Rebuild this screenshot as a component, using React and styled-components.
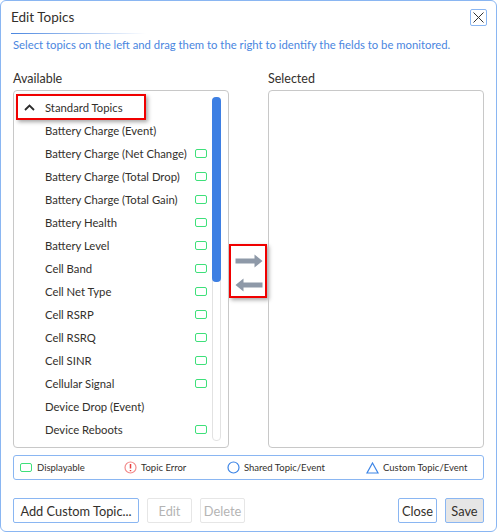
import React from "react";
import styled, { createGlobalStyle } from "styled-components";

const Global = createGlobalStyle`
  html, body { margin: 0; padding: 0; background: #fff; }
  body { font-family: Lato, "Open Sans", sans-serif; color: #2b2b2b; }
`;

const Dialog = styled.div`
  box-sizing: border-box;
  width: 497px;
  height: 532px;
  border: 1px solid #8ab6f2;
  border-radius: 6px;
  padding: 0 12px;
  display: flex;
  flex-direction: column;
  background: #fff;
`;

const Header = styled.div`
  height: 32px;
  display: flex;
  align-items: center;
  justify-content: space-between;
  margin: 0 -3px 0 -2px;
  box-sizing: border-box;
`;

const Title = styled.div`
  font-size: 13.5px;
  color: #33302c;
`;

const CloseX = styled.button`
  width: 17px;
  height: 17px;
  padding: 0;
  border: 1px solid #8ab6f2;
  border-radius: 2px;
  background: #fff;
  display: flex;
  align-items: center;
  justify-content: center;
`;

const Rule = styled.div`
  height: 1px;
  width: 135px;
  margin-left: -2px;
  background: linear-gradient(to right, #4a86e0, #ffffff);
`;

const Hint = styled.div`
  font-size: 11.3px;
  color: #4a86e0;
  height: 22px;
  line-height: 22px;
  white-space: nowrap;
`;

const Columns = styled.div`
  display: grid;
  grid-template-columns: 216px 39px 216px;
  margin-top: 14px;
`;

const Column = styled.div`
  display: flex;
  flex-direction: column;
`;

const Label = styled.div`
  font-size: 12.5px;
  height: 20px;
  line-height: 17px;
  color: #33302c;
`;

const ListBox = styled.div`
  position: relative;
  box-sizing: border-box;
  height: 358px;
  border: 1px solid #c8c8c8;
  border-radius: 4px;
  padding: 5px 0 0 0;
  overflow: hidden;
`;

const Row = styled.div`
  display: flex;
  align-items: center;
  height: 23px;
  padding-left: 31px;
  font-size: 11.3px;
  color: #33302c;
  white-space: nowrap;
`;

const GroupRow = styled(Row)`
  padding-left: 10px;
  gap: 10px;
`;

const RowName = styled.span`
  width: 150px;
`;

const GreenMark = styled.span`
  box-sizing: border-box;
  width: 12px;
  height: 9px;
  border: 1.5px solid #3ee07a;
  border-radius: 2px;
  display: inline-block;
`;

const Track = styled.div`
  position: absolute;
  top: 6px;
  right: 7px;
  width: 9px;
  height: 344px;
  box-sizing: border-box;
  border: 1px solid #e2e2e2;
  border-radius: 4px;
`;

const Thumb = styled.div`
  position: absolute;
  top: -1px;
  left: -1px;
  width: 9px;
  height: 185px;
  border-radius: 4px;
  background: #3d7fe3;
`;

const Callout = styled.div`
  position: absolute;
  box-sizing: border-box;
  border: 2px solid #f00000;
  box-shadow: 2px 2px 4px rgba(0, 0, 0, 0.35);
  top: 3px;
  left: 2px;
  width: 130px;
  height: 26px;
`;

const Middle = styled.div`
  display: flex;
  align-items: center;
  justify-content: flex-start;
  padding-top: 24px;
`;

const ArrowBox = styled.div`
  box-sizing: border-box;
  width: 38px;
  height: 54px;
  padding: 3px 0 0 2px;
  border: 2px solid #f00000;
  box-shadow: 2px 2px 4px rgba(0, 0, 0, 0.35);
  display: flex;
  flex-direction: column;
  align-items: center;
  justify-content: center;
  gap: 10px;
`;

const Legend = styled.div`
  box-sizing: border-box;
  display: grid;
  grid-template-columns: 104px 103px 139px 1fr;
  align-items: center;
  height: 25px;
  margin-top: 7px;
  padding-left: 6px;
  border: 1px solid #8ab6f2;
  border-radius: 3px;
  font-size: 9.5px;
  color: #33302c;
`;

const LegendItem = styled.div`
  display: flex;
  align-items: center;
  gap: 4px;
  white-space: nowrap;
`;

const LegendGreen = styled.span`
  box-sizing: border-box;
  width: 12px;
  height: 9px;
  margin-right: 1px;
  border: 1.5px solid #3ee07a;
  border-radius: 2px;
`;

const Footer = styled.div`
  display: flex;
  align-items: center;
  margin-top: 18px;
  gap: 8px;
`;

const Button = styled.button`
  box-sizing: border-box;
  height: 25px;
  width: ${(p) => p.$w}px;
  padding: 0;
  font-family: inherit;
  font-size: 12.8px;
  border-radius: 2px;
  color: ${(p) => (p.disabled ? "#b4b4b4" : "#33302c")};
  background: ${(p) => (p.$primary ? "#e6e6e6" : "#fff")};
  border: 1px solid ${(p) => (p.disabled ? "#e6e6e6" : "#8ab6f2")};
`;

const Spacer = styled.div`
  flex: 1;
`;

const topics = [
  ["Battery Charge (Event)", false],
  ["Battery Charge (Net Change)", true],
  ["Battery Charge (Total Drop)", true],
  ["Battery Charge (Total Gain)", true],
  ["Battery Health", true],
  ["Battery Level", true],
  ["Cell Band", true],
  ["Cell Net Type", true],
  ["Cell RSRP", true],
  ["Cell RSRQ", true],
  ["Cell SINR", true],
  ["Cellular Signal", true],
  ["Device Drop (Event)", false],
  ["Device Reboots", true],
];

const Arrow = ({ flip }) => (
  <svg width="28" height="14" viewBox="0 0 28 14" style={{ transform: flip ? "scaleX(-1)" : "none" }}>
    <path d="M0.5 4.5H19.5V0.5L27.5 7L19.5 13.5V9.5H0.5Z" fill="#8e99a8" />
  </svg>
);

const App = () => (
  <>
    <Global />
    <Dialog>
      <Header>
        <Title>Edit Topics</Title>
        <CloseX>
          <svg width="11" height="11" viewBox="0 0 11 11">
            <path d="M0.5 0.5L10.5 10.5M10.5 0.5L0.5 10.5" stroke="#333" strokeWidth="1" />
          </svg>
        </CloseX>
      </Header>
      <Rule />
      <Hint>Select topics on the left and drag them to the right to identify the fields to be monitored.</Hint>
      <Columns>
        <Column>
          <Label>Available</Label>
          <ListBox>
            <GroupRow>
              <svg width="11" height="7" viewBox="0 0 11 7">
                <path d="M1 6L5.5 1.5L10 6" fill="none" stroke="#2b2b2b" strokeWidth="1.8" />
              </svg>
              <span>Standard Topics</span>
            </GroupRow>
            {topics.map(([name, ok]) => (
              <Row key={name}>
                <RowName>{name}</RowName>
                {ok && <GreenMark />}
              </Row>
            ))}
            <Track>
              <Thumb />
            </Track>
            <Callout />
          </ListBox>
        </Column>
        <Middle>
          <ArrowBox>
            <Arrow />
            <Arrow flip />
          </ArrowBox>
        </Middle>
        <Column>
          <Label>Selected</Label>
          <ListBox />
        </Column>
      </Columns>
      <Legend>
        <LegendItem>
          <LegendGreen />
          Displayable
        </LegendItem>
        <LegendItem>
          <svg width="13" height="13" viewBox="0 0 13 13">
            <circle cx="6.5" cy="6.5" r="5.5" fill="none" stroke="#f28a8a" strokeWidth="1.2" />
            <path d="M6.5 3V7.5M6.5 9V10.2" stroke="#e84040" strokeWidth="1.5" />
          </svg>
          Topic Error
        </LegendItem>
        <LegendItem>
          <svg width="13" height="13" viewBox="0 0 13 13">
            <circle cx="6.5" cy="6.5" r="5.5" fill="none" stroke="#3d85e6" strokeWidth="1.2" />
          </svg>
          Shared Topic/Event
        </LegendItem>
        <LegendItem>
          <svg width="13" height="12" viewBox="0 0 13 12">
            <path d="M6.5 1L12 11H1Z" fill="none" stroke="#3d85e6" strokeWidth="1.2" />
          </svg>
          Custom Topic/Event
        </LegendItem>
      </Legend>
      <Footer>
        <Button $w={126}>Add Custom Topic...</Button>
        <Button disabled $w={45}>Edit</Button>
        <Button disabled $w={45}>Delete</Button>
        <Spacer />
        <Button $w={39}>Close</Button>
        <Button $primary $w={39}>Save</Button>
      </Footer>
    </Dialog>
  </>
);

export default App;
